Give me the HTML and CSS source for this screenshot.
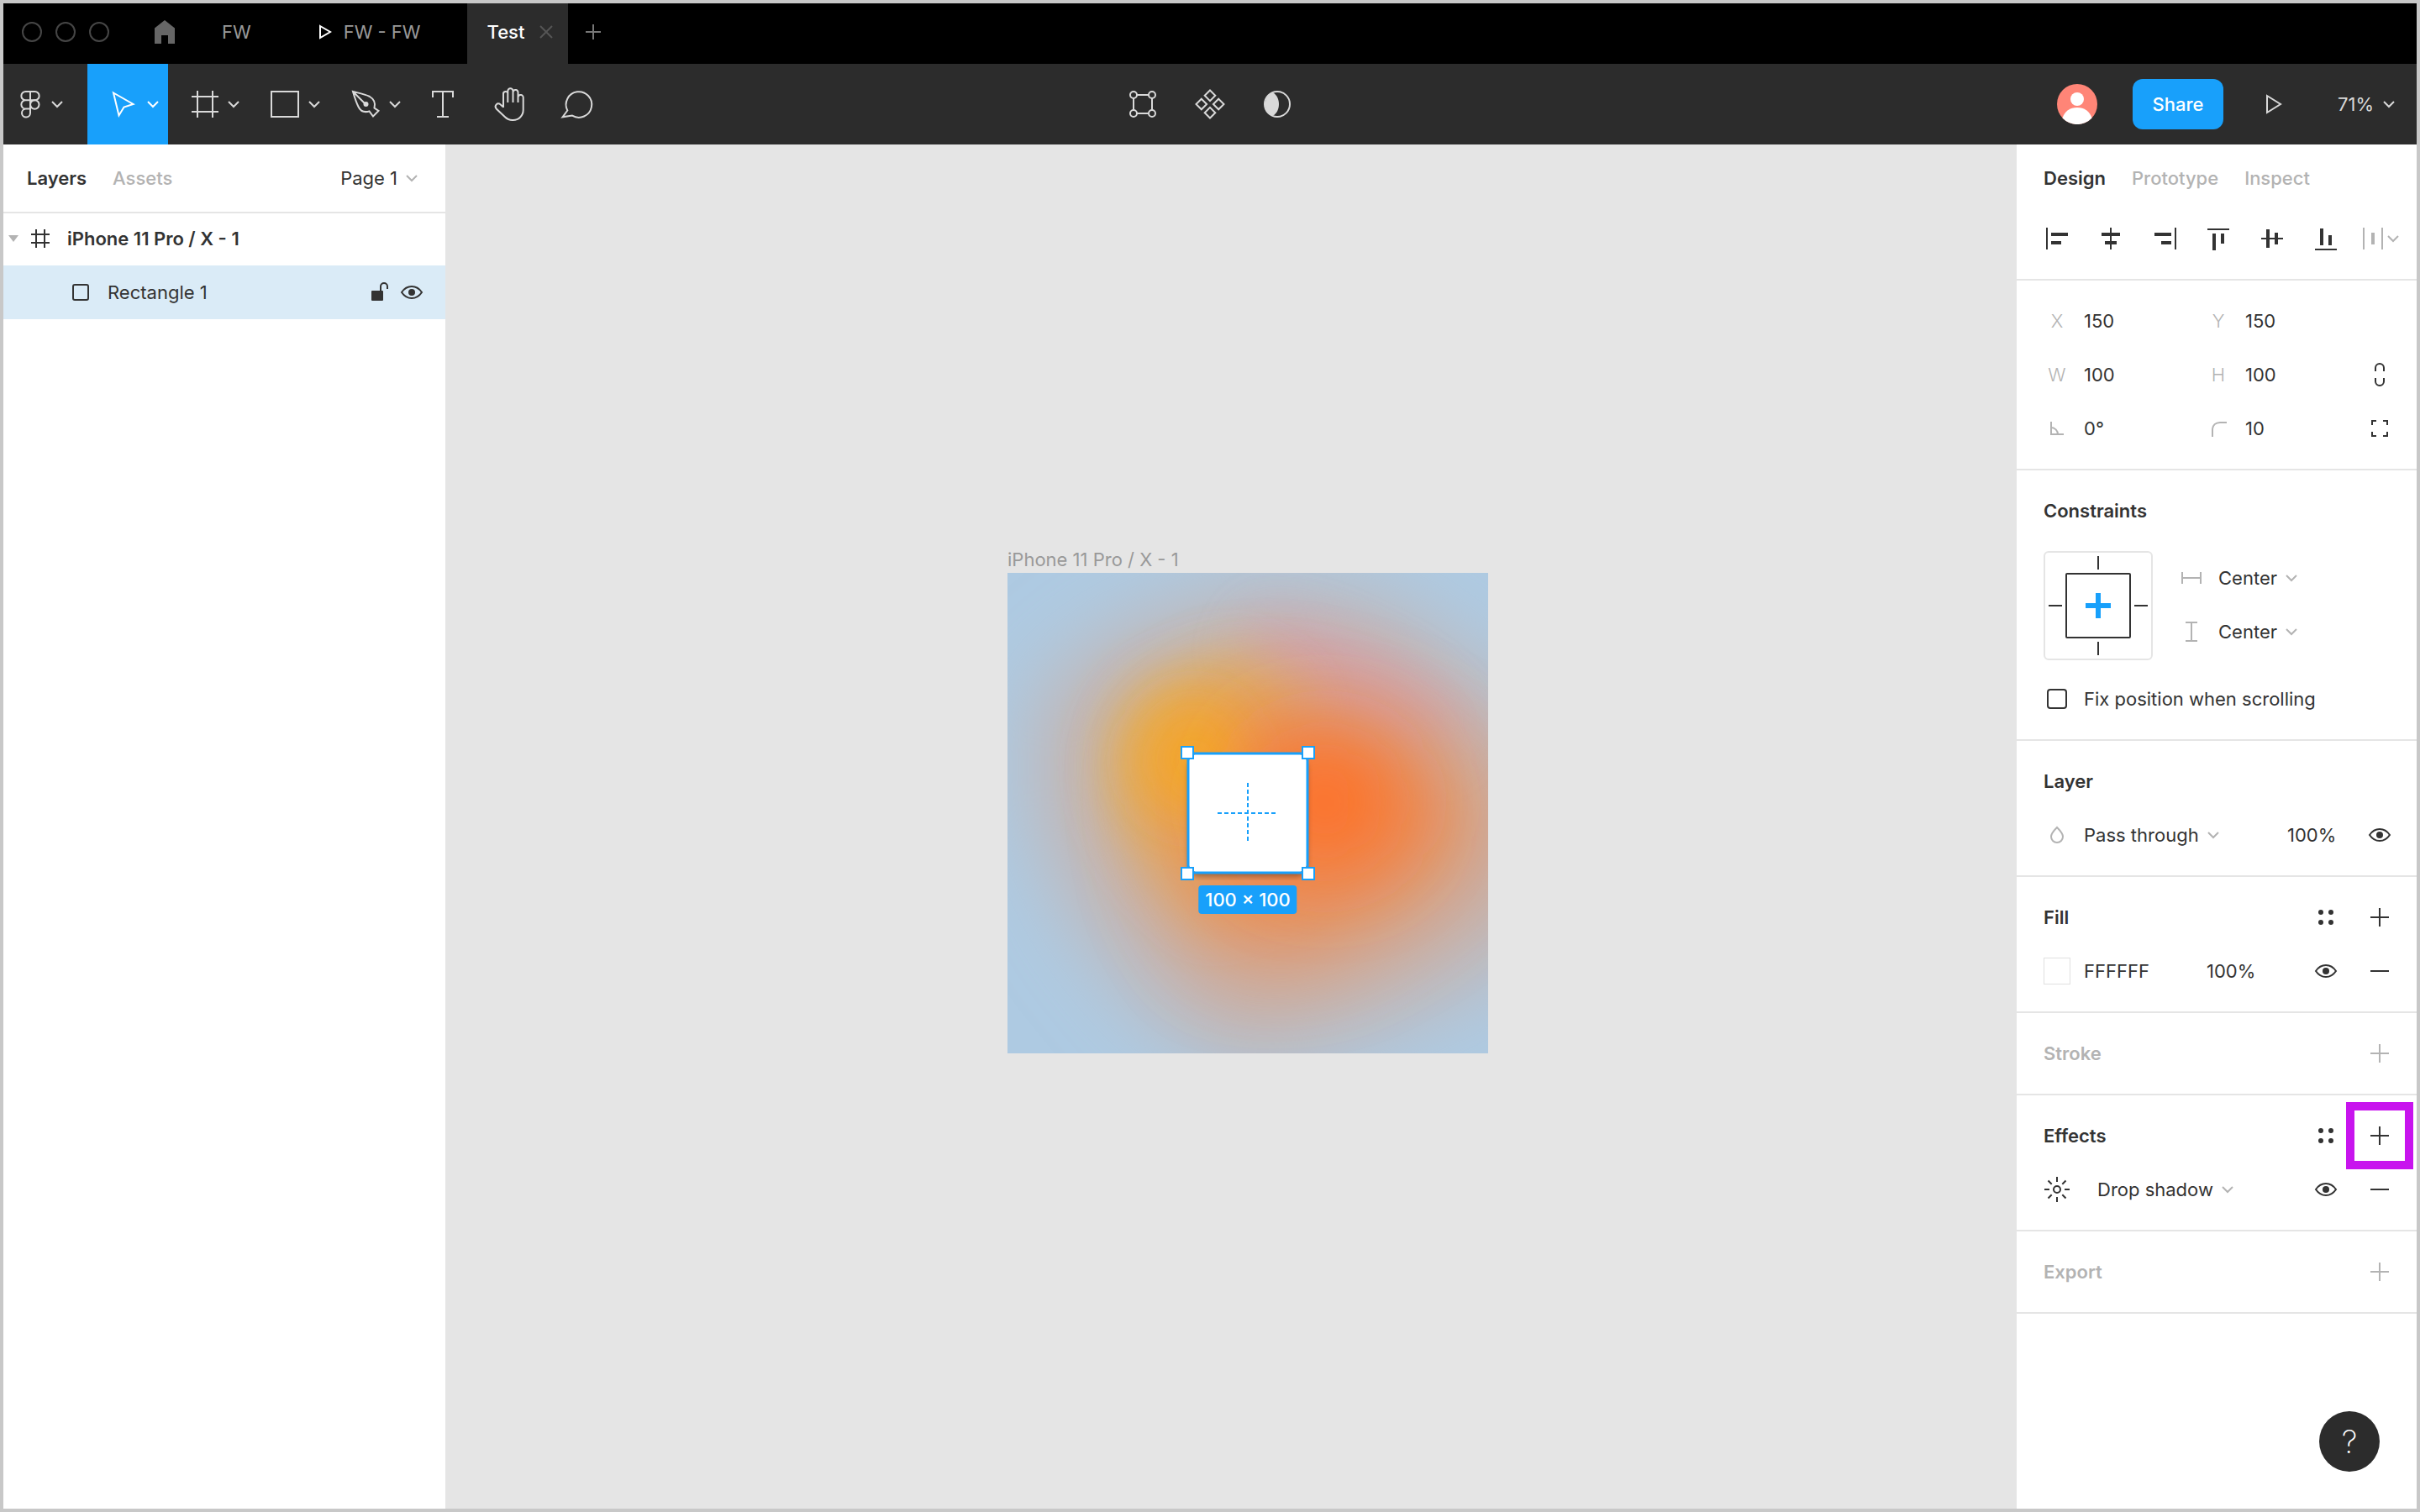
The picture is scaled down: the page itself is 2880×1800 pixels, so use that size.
FILE: index.html
```html
<!DOCTYPE html>
<html lang="en">
<head>
<meta charset="utf-8">
<title>Test</title>
<link rel="stylesheet" href="styles.css">
</head>
<body>
<svg class="defs" aria-hidden="true">
  <symbol id="chevron" viewBox="0 0 16 16"><path d="M2 5l6 6 6-6"/></symbol>
  <symbol id="eye" viewBox="0 0 32 32"><path d="M4 16c3-4.500 7-7 12-7s9 2.500 12 7c-3 4.500-7 7-12 7s-9-2.500-12-7z"/><circle class="solid" cx="16" cy="16" r="4"/></symbol>
  <symbol id="plus" viewBox="0 0 32 32"><path d="M16 5v22M5 16h22"/></symbol>
  <symbol id="minus" viewBox="0 0 32 32"><path d="M5 16h22"/></symbol>
  <symbol id="dots" viewBox="0 0 32 32"><g class="solid"><circle cx="10" cy="10" r="3"/><circle cx="22" cy="10" r="3"/><circle cx="10" cy="22" r="3"/><circle cx="22" cy="22" r="3"/></g></symbol>
</svg>
<div class="app">
  <header class="tabbar">
    <div class="lights"><i></i><i></i><i></i></div>
    <button class="home" aria-label="Home"><svg class="icon24" viewBox="0 0 24 28"><path class="solid" d="M12 0l12 9.500V28h-8V18H8v10H0V9.500z"/></svg></button>
    <a class="tab tab-file" href="#">FW</a>
    <a class="tab tab-proto" href="#"><svg class="play-small" viewBox="0 0 16 18"><path d="M2 2l12 7-12 7z"/></svg>FW - FW</a>
    <a class="tab tab-active" href="#">Test <svg class="close" viewBox="0 0 16 16"><path d="M1 1l14 14M15 1L1 15"/></svg></a>
    <button class="new-tab" aria-label="New tab"><svg class="icon20" viewBox="0 0 20 20"><path d="M10 1v18M1 10h18"/></svg></button>
  </header>

  <nav class="toolbar">
    <div class="tools">
      <button class="tool tool-menu" aria-label="Main menu"><svg class="glyph" viewBox="0 0 48 48"><path d="M24 9h-5.500a5 5 0 0 0 0 10.300H24zM24 9h5.500a5 5 0 0 1 0 10.300H24zM24 19.300h-5.500a5 5 0 0 0 0 10.300H24zM24 29.600h-5.500a5 5 0 1 0 5.500 5z"/><circle cx="29.300" cy="24.500" r="5.200"/></svg><svg class="chev"><use href="#chevron"/></svg></button>
      <button class="tool tool-wide active" aria-label="Move"><svg class="glyph" viewBox="0 0 48 48"><path d="M11 10.500l23.500 13.500-11 3.500-6 10z"/></svg><svg class="chev"><use href="#chevron"/></svg></button>
      <button class="tool tool-wide" aria-label="Frame"><svg class="glyph" viewBox="0 0 48 48"><path d="M15 8v32M33 8v32M8 15h32M8 33h32"/></svg><svg class="chev"><use href="#chevron"/></svg></button>
      <button class="tool tool-wide" aria-label="Rectangle"><svg class="glyph" viewBox="0 0 48 48"><path d="M7 9h32v30H7z"/></svg><svg class="chev"><use href="#chevron"/></svg></button>
      <button class="tool tool-wide" aria-label="Pen"><svg class="glyph" viewBox="0 0 48 48"><path d="M8 9c8 2 14 3 20 6 6 3.500 7 8 5.500 13.500L38.500 32 32 38.500l-4.500-6C22 34 17 32.500 14.500 27 12 22 10 16 8 9zM8 9l15 15"/><circle class="solid" cx="23.500" cy="24" r="3"/></svg><svg class="chev"><use href="#chevron"/></svg></button>
      <button class="tool" aria-label="Text"><svg class="glyph" viewBox="0 0 48 48"><path d="M11 16V9h24v7M23 9v30M16 39h14"/></svg></button>
      <button class="tool" aria-label="Hand"><svg class="glyph" viewBox="2 0 48 48"><path d="M17 28V12.500a2.800 3 0 0 1 5.600-1M22.300 22V8.500a3.100 3.300 0 0 1 6.200 0V22M28.500 9.500a3 3 0 0 1 6 1.200V22M34.500 15.500a3.100 3 0 0 1 6.200 1V31a12 12 0 0 1-12 12h-1c-4 0-6.500-1.500-9-4L8.700 29.500c-3-4 1.300-8 5-5L17 27.500"/></svg></button>
      <button class="tool" aria-label="Comment"><svg class="glyph" viewBox="1 0 48 48"><path d="M12.300 31.500A15.300 15.300 0 1 1 18 37.600L6.500 39.300z"/></svg></button>
    </div>
    <div class="center-tools">
      <button class="tool" aria-label="Edit object"><svg class="glyph" viewBox="0 0 48 48"><g><circle cx="13" cy="13" r="4"/><circle cx="35" cy="13" r="4"/><circle cx="13" cy="35" r="4"/><circle cx="35" cy="35" r="4"/><path d="M17 13h14M17 35h14M13 17v14M35 17v14"/></g></svg></button>
      <button class="tool" aria-label="Create component"><svg class="glyph" viewBox="0 0 48 48"><path d="M24 7.500l6.300 6.300-6.300 6.300-6.300-6.300zM24 27.900l6.300 6.300-6.300 6.300-6.300-6.300zM13.800 17.700l6.300 6.300-6.300 6.300L7.500 24zM34.200 17.700l6.300 6.300-6.300 6.300-6.300-6.300z"/></svg></button>
      <button class="tool" aria-label="Use as mask"><svg class="glyph" viewBox="0 0 48 48"><circle cx="24" cy="24" r="15"/><path class="solid" d="M18.500 10a15.500 15.500 0 0 0 0 28c10-5 10-23 0-28z"/></svg></button>
    </div>
    <div class="actions">
      <svg class="avatar" viewBox="0 0 48 48" role="img" aria-label="Account"><circle cx="24" cy="24" r="24" fill="#ff8577"/><circle cx="24" cy="18" r="8" fill="#fff"/><path d="M6.500 40.500C9 32.500 15.500 28 24 28s15 4.500 17.500 12.500a24 24 0 0 1-35 0z" fill="#fff"/></svg>
      <button class="share">Share</button>
      <button class="present" aria-label="Present"><svg class="icon24" viewBox="0 0 24 24"><path d="M4 2l16 10L4 22z"/></svg></button>
      <button class="zoom">71%<svg class="chev"><use href="#chevron"/></svg></button>
    </div>
  </nav>

  <div class="workspace">
    <aside class="layers">
      <div class="layers-head">
        <button class="ptab on">Layers</button>
        <button class="ptab">Assets</button>
        <button class="page">Page 1<svg class="chev muted"><use href="#chevron"/></svg></button>
      </div>
      <div class="layer layer-frame">
        <svg class="caret" viewBox="0 0 12 8"><path class="solid" d="M0 0h12L6 8z"/></svg>
        <svg class="icon24" viewBox="0 0 24 24"><path d="M7 1v22M17 1v22M1 7h22M1 17h22"/></svg>
        <span>iPhone 11 Pro / X - 1</span>
      </div>
      <div class="layer layer-rect">
        <svg class="icon24" viewBox="0 0 24 24"><rect x="3" y="3" width="18" height="18" rx="2"/></svg>
        <span>Rectangle 1</span>
        <button class="lock" aria-label="Lock"><svg class="icon24" viewBox="0 0 24 24"><rect class="solid" x="2" y="10" width="14" height="12" rx="1"/><path d="M13 11V5a4 4 0 0 1 8 0v3"/></svg></button>
        <button aria-label="Hide"><svg class="icon32"><use href="#eye"/></svg></button>
      </div>
    </aside>

    <main class="canvas">
      <div class="artboard">
        <span class="artboard-name">iPhone 11 Pro / X - 1</span>
        <svg class="art" viewBox="0 0 572 572" aria-hidden="true">
          <defs>
            <filter id="soft" x="-80%" y="-80%" width="260%" height="260%"><feGaussianBlur stdDeviation="32"/></filter>
            <filter id="softer" x="-80%" y="-80%" width="260%" height="260%"><feGaussianBlur stdDeviation="50"/></filter>
          </defs>
          <rect width="572" height="572" fill="#aecae2"/>
          <path filter="url(#softer)" fill="#c6b2ac" d="M40 150L140 70 300 20 450 40 570 130 670 230 660 400 550 490 400 550 280 585 180 520 90 410 40 290z"/>
          <ellipse filter="url(#soft)" fill="#da94aa" opacity=".6" cx="410" cy="135" rx="140" ry="42" transform="rotate(26 410 135)"/>
          <path filter="url(#soft)" fill="#e2b254" opacity=".8" d="M118 200L160 135 270 95 350 140 350 370 240 420 165 350 125 280z"/>
          <path filter="url(#softer)" fill="#e8905c" d="M190 200L290 140 420 170 540 230 570 320 480 400 370 460 260 460 205 380 180 270z"/>
          <ellipse filter="url(#soft)" fill="#f5a828" opacity=".9" cx="222" cy="222" rx="66" ry="72"/>
          <ellipse filter="url(#softer)" fill="#ff7028" cx="378" cy="272" rx="90" ry="80"/>
        </svg>
        <svg class="selection" viewBox="0 0 160 160" aria-hidden="true">
          <rect class="shape" x="9" y="9" width="142" height="142" rx="14"/>
          <rect class="outline" x="9" y="9" width="142" height="142"/>
          <path class="dash" d="M80 44v72M44 80h72"/>
          <g class="handles"><rect x="1" y="1" width="14" height="14"/><rect x="145" y="1" width="14" height="14"/><rect x="1" y="145" width="14" height="14"/><rect x="145" y="145" width="14" height="14"/></g>
        </svg>
        <span class="size">100 × 100</span>
      </div>
    </main>

    <aside class="inspector">
      <div class="inspector-tabs">
        <button class="ptab on">Design</button>
        <button class="ptab">Prototype</button>
        <button class="ptab">Inspect</button>
      </div>
      <div class="align">
        <button aria-label="Align left"><svg class="icon32" viewBox="0 0 32 32"><path d="M4 3v26"/><path class="solid" d="M9 9h20v4H9zM9 19h12v4H9z"/></svg></button>
        <button aria-label="Align horizontal centers"><svg class="icon32" viewBox="0 0 32 32"><path d="M16 3v26"/><path class="solid" d="M5 9h22v4H5zM9 19h14v4H9z"/></svg></button>
        <button aria-label="Align right"><svg class="icon32" viewBox="0 0 32 32"><path d="M29 3v26"/><path class="solid" d="M4 9h20v4H4zM12 19h12v4H12z"/></svg></button>
        <button aria-label="Align top"><svg class="icon32" viewBox="0 0 32 32"><path d="M3 5h26"/><path class="solid" d="M9 10h4v20H9zM19 10h4v12h-4z"/></svg></button>
        <button aria-label="Align vertical centers"><svg class="icon32" viewBox="0 0 32 32"><path d="M3 16h26"/><path class="solid" d="M9 5h4v22H9zM19 9h4v14h-4z"/></svg></button>
        <button aria-label="Align bottom"><svg class="icon32" viewBox="0 0 32 32"><path d="M3 29h26"/><path class="solid" d="M9 4h4v20H9zM19 12h4v12h-4z"/></svg></button>
        <button class="muted" aria-label="Distribute"><svg class="icon32" viewBox="0 0 32 32"><path d="M5 3v26M27 3v26"/><path class="solid" d="M14 9h4v14h-4z"/></svg><svg class="chev"><use href="#chevron"/></svg></button>
      </div>

      <section class="section metrics">
        <label for="x">X</label><input id="x" value="150">
        <label for="y">Y</label><input id="y" value="150"><span></span>
        <label for="w">W</label><input id="w" value="100">
        <label for="h">H</label><input id="h" value="100">
        <button aria-label="Constrain proportions"><svg class="icon32" viewBox="0 0 32 32"><path d="M11 12V8a5 5 0 0 1 10 0v4M11 20v4a5 5 0 0 0 10 0v-4"/></svg></button>
        <label for="rot" aria-label="Rotation"><svg class="icon32" viewBox="0 0 32 32"><path d="M9 8v15h15M9 15a8 8 0 0 1 8 8"/></svg></label><input id="rot" value="0°">
        <label for="rad" aria-label="Corner radius"><svg class="icon32" viewBox="0 0 32 32"><path d="M9 26v-8C9 12 13 9 18 9h8"/></svg></label><input id="rad" value="10">
        <button aria-label="Independent corners"><svg class="icon32" viewBox="0 0 32 32"><path d="M7 12V7h5M20 7h5v5M25 20v5h-5M12 25H7v-5"/></svg></button>
      </section>

      <section class="section">
        <h2>Constraints</h2>
        <div class="constraints">
          <svg class="pins" viewBox="0 0 130 130"><rect x="1" y="1" width="128" height="128" rx="5" stroke="#e5e5e5"/><rect x="27" y="27" width="76" height="76" rx="1"/><path d="M65 6v16M65 108v16M6 65h16M108 65h16"/><path d="M65 50v30M50 65h30" stroke="#18a0fb" stroke-width="6"/></svg>
          <div class="pin-fields">
            <div class="row"><svg class="icon32 muted" viewBox="0 0 32 32"><path d="M5 9v14M27 9v14M5 16h22"/></svg><select aria-label="Horizontal constraint"><option>Center</option></select><svg class="chev muted"><use href="#chevron"/></svg></div>
            <div class="row"><svg class="icon32 muted" viewBox="0 0 32 32"><path d="M9 5h14M9 27h14M16 5v22"/></svg><select aria-label="Vertical constraint"><option>Center</option></select><svg class="chev muted"><use href="#chevron"/></svg></div>
          </div>
        </div>
        <div class="row fix"><input type="checkbox" id="fix"><label for="fix">Fix position when scrolling</label></div>
      </section>

      <section class="section">
        <h2>Layer</h2>
        <div class="row">
          <span class="cell muted"><svg class="icon32" viewBox="0 0 32 32"><path d="M16 7c4 4 7 7 7 11a7 7 0 0 1-14 0c0-4 3-7 7-11z"/></svg></span>
          <span class="grow"><select aria-label="Blend mode"><option>Pass through</option></select><svg class="chev muted"><use href="#chevron"/></svg></span>
          <input class="opacity" aria-label="Layer opacity" value="100%">
          <button class="cell" aria-label="Hide layer"><svg class="icon32"><use href="#eye"/></svg></button>
        </div>
      </section>

      <section class="section">
        <div class="row"><h2>Fill</h2><button class="cell" aria-label="Fill styles"><svg class="icon32"><use href="#dots"/></svg></button><button class="cell" aria-label="Add fill"><svg class="icon32"><use href="#plus"/></svg></button></div>
        <div class="row">
          <span class="cell"><button class="swatch" aria-label="Fill colour"></button></span>
          <input class="hex" aria-label="Fill hex" value="FFFFFF">
          <input class="fill-opacity" aria-label="Fill opacity" value="100%">
          <button class="cell" aria-label="Hide fill"><svg class="icon32"><use href="#eye"/></svg></button>
          <button class="cell" aria-label="Remove fill"><svg class="icon32"><use href="#minus"/></svg></button>
        </div>
      </section>

      <section class="section muted">
        <div class="row"><h2>Stroke</h2><button class="cell" aria-label="Add stroke"><svg class="icon32"><use href="#plus"/></svg></button></div>
      </section>

      <section class="section">
        <div class="row"><h2>Effects</h2><button class="cell" aria-label="Effect styles"><svg class="icon32"><use href="#dots"/></svg></button><button class="cell marked" aria-label="Add effect"><svg class="icon32"><use href="#plus"/></svg></button></div>
        <div class="row">
          <button class="cell" aria-label="Effect settings"><svg class="icon32" viewBox="0 0 32 32"><circle cx="16" cy="16" r="4"/><path d="M16 1v6M16 25v6M1 16h6M25 16h6M5.500 5.500l4.200 4.200M22.300 22.300l4.200 4.200M5.500 26.500l4.200-4.200M22.300 9.700l4.200-4.200"/></svg></button>
          <span class="grow effect"><select aria-label="Effect type"><option>Drop shadow</option></select><svg class="chev muted"><use href="#chevron"/></svg></span>
          <button class="cell" aria-label="Hide effect"><svg class="icon32"><use href="#eye"/></svg></button>
          <button class="cell" aria-label="Remove effect"><svg class="icon32"><use href="#minus"/></svg></button>
        </div>
      </section>

      <section class="section muted">
        <div class="row"><h2>Export</h2><button class="cell" aria-label="Add export"><svg class="icon32"><use href="#plus"/></svg></button></div>
      </section>

      <button class="help" aria-label="Help">?</button>
    </aside>
  </div>
</div>
</body>
</html>
```
FILE: styles.css
```css
* { box-sizing: border-box; }

body {
  margin: 0;
  font: 400 22px/32px Inter, "Liberation Sans", sans-serif;
  color: #333;
}

button, input, select {
  margin: 0;
  padding: 0;
  border: 0;
  border-radius: 0;
  background: none;
  font: inherit;
  color: inherit;
  appearance: none;
  outline: 0;
}

button {
  display: flex;
  align-items: center;
  justify-content: center;
}

input { min-width: 0; }
select { field-sizing: content; }
a { color: inherit; text-decoration: none; }

svg {
  flex: none;
  display: block;
  fill: none;
  stroke: currentColor;
  stroke-width: 2;
}

.solid { fill: currentColor; stroke: none; }
.muted { color: #b3b3b3; }
.defs { position: absolute; width: 0; height: 0; }
.icon20 { width: 20px; height: 20px; }
.icon24 { width: 24px; height: 24px; }
.icon32 { width: 32px; height: 32px; }
.chev { width: 16px; height: 16px; }

.app {
  display: flex;
  flex-direction: column;
  min-height: 100vh;
  border: 4px solid #c8c8c8;
}

/* window tabs */
.tabbar {
  display: flex;
  align-items: center;
  height: 72px;
  padding-bottom: 4px;
  background: #000;
  color: #999;
}

.lights { display: flex; gap: 16px; padding-left: 22px; }
.lights i { width: 24px; height: 24px; border: 2px solid #464646; border-radius: 50%; }
.home { width: 64px; margin-left: 34px; color: #666; }
.home svg { height: 28px; }
.tab { display: flex; align-items: center; height: 68px; }
.tab-file { margin-left: 36px; }
.tab-proto { gap: 14px; margin-left: 80px; }
.play-small { width: 16px; height: 18px; color: #fff; }
.tab-active {
  align-self: flex-start;
  gap: 18px;
  width: 120px;
  height: 72px;
  margin-left: 55px;
  padding: 0 0 4px 24px;
  background: #2c2c2c;
  color: #fff;
  font-weight: 500;
}
.close { width: 16px; height: 16px; color: #555; }
.new-tab { width: 60px; color: #777; }

/* tools */
.toolbar {
  display: grid;
  grid-template-columns: 1fr auto 1fr;
  height: 96px;
  background: #2c2c2c;
  color: #d9d9d9;
}

.tools, .center-tools { display: flex; }
.tool { width: 80px; height: 96px; }
.tool-menu { width: 100px; padding-right: 20px; }
.tool-wide { width: 96px; gap: 2px; padding-left: 10px; }
.glyph { width: 48px; height: 48px; }
.active { background: #18a0fb; color: #fff; }

.actions { display: flex; align-items: center; justify-content: flex-end; padding-right: 25px; }
.avatar { width: 48px; height: 48px; stroke: none; }
.share {
  width: 108px;
  height: 60px;
  margin-left: 42px;
  border-radius: 12px;
  background: #18a0fb;
  color: #fff;
  font-weight: 500;
}
.present { width: 80px; height: 96px; margin-left: 20px; }
.zoom { gap: 10px; height: 96px; margin-left: 36px; }

/* columns */
.workspace { flex: 1; display: flex; }

.layers { flex: none; width: 526px; background: #fff; }
.layers-head { display: flex; align-items: center; height: 80px; padding: 0 32px 0 28px; }
.ptab { color: #b3b3b3; font-weight: 500; }
.ptab.on { color: #333; font-weight: 600; }
.layers-head .ptab { margin-right: 31px; }
.page { gap: 9px; margin-left: auto; }

.layer { display: flex; align-items: center; height: 64px; }
.layer-frame { padding-left: 6px; font-weight: 600; box-shadow: inset 0 2px #e5e5e5; }
.caret { width: 12px; height: 8px; margin-right: 14px; color: #b3b3b3; }
.layer-frame span { margin-left: 20px; }
.layer-rect { padding: 0 24px 0 80px; background: #daebf7; }
.layer-rect span { margin-left: 20px; }
.lock { margin-left: auto; margin-right: 10px; }

.canvas { flex: 1; position: relative; background: #e5e5e5; }

/* objects placed on the free canvas */
.artboard { position: absolute; left: calc(50% - 266px); top: calc(50% - 302px); width: 572px; height: 572px; }
.art { width: 100%; height: 100%; overflow: hidden; stroke: none; }
.artboard-name { position: absolute; left: 0; bottom: 100%; color: #999; white-space: nowrap; }
.selection { position: absolute; left: 206px; top: 206px; width: 160px; height: 160px; stroke: #18a0fb; }
.selection .shape { fill: #fff; stroke: none; filter: drop-shadow(0 5px 3px rgba(0, 0, 0, .3)); }
.selection .outline { stroke-width: 3; }
.selection .dash { stroke-dasharray: 5 3; }
.selection .handles { fill: #fff; }
.size {
  position: absolute;
  left: 50%;
  top: 372px;
  translate: -50% 0;
  padding: 0 8px;
  border-radius: 4px;
  background: #18a0fb;
  color: #fff;
  font-weight: 500;
  line-height: 34px;
  white-space: nowrap;
}

/* inspector */
.inspector { position: relative; flex: none; width: 476px; background: #fff; }
.inspector-tabs { display: flex; align-items: center; gap: 31px; height: 80px; padding-left: 32px; }
.align { display: flex; height: 82px; padding: 0 0 16px 16px; border-bottom: 2px solid #e5e5e5; }
.align button { width: 64px; }

.section { padding: 16px 12px 16px 16px; border-bottom: 2px solid #e5e5e5; }
.section h2 { flex: 1; margin: 0; padding-left: 16px; font-size: 22px; font-weight: 600; line-height: 64px; }
.row { display: flex; align-items: center; height: 64px; }
.cell { display: flex; align-items: center; justify-content: center; flex: none; width: 64px; height: 64px; }
.grow { display: flex; align-items: center; flex: 1; gap: 9px; }

.metrics { display: grid; grid-template-columns: 64px 128px 64px 128px 64px; grid-auto-rows: 64px; }
.metrics label { display: flex; align-items: center; justify-content: center; color: #b3b3b3; font-weight: 300; }
.metrics input { width: 100%; }

.constraints { display: flex; gap: 30px; margin: 16px 0 14px 16px; }
.pins { width: 130px; height: 130px; }
.pin-fields .row { gap: 9px; }
.pin-fields .icon32 { margin-right: 7px; }

.fix input { width: 24px; height: 24px; margin: 0 20px; border: 2px solid #333; border-radius: 4px; }
.opacity { width: 80px; padding-left: 2px; }
.hex { flex: 1; }
.fill-opacity { width: 110px; }
.swatch { width: 32px; height: 32px; border: 1px solid #e0e0e0; }
.effect { padding-left: 16px; }

.marked { position: relative; }
.marked::after { content: ""; position: absolute; inset: -8px; border: 10px solid #c814ee; }

.help {
  position: absolute;
  right: 44px;
  bottom: 44px;
  width: 72px;
  height: 72px;
  border-radius: 50%;
  background: #2c2c2c;
  color: #fff;
  font-size: 38px;
  font-weight: 200;
}
```
